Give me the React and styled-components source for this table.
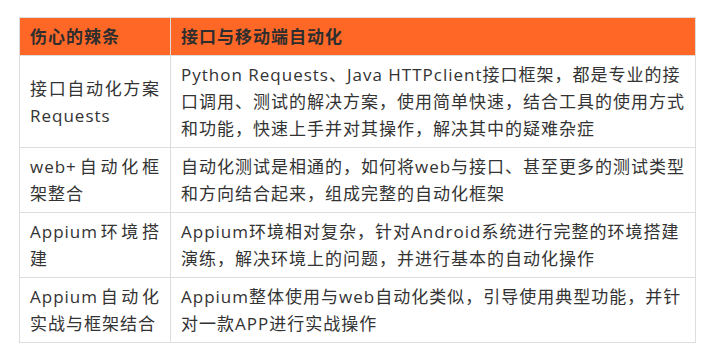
import React from 'react'
import styled, { createGlobalStyle } from 'styled-components'

const GlobalStyle = createGlobalStyle`
  body {
    margin: 0;
    background: #ffffff;
  }
`

const Page = styled.div`
  padding: 17px 0 0 19px;
  font-family: "Open Sans", "Noto Sans CJK SC", sans-serif;
`

const Table = styled.table`
  width: 677px;
  border-collapse: collapse;
  table-layout: fixed;
  font-size: 17px;
  line-height: 27px;
  letter-spacing: 1px;
  color: #333333;
`

const HeadCell = styled.th`
  background: #ff6726;
  border: 1px solid #dddddd;
  padding: 5px 10px;
  text-align: left;
  font-weight: 700;
  color: #2e2e2e;
  width: ${(p) => p.width || 'auto'};
  box-sizing: border-box;
`

const Cell = styled.td`
  border: 1px solid #dddddd;
  padding: ${(p) => (p.justify ? '5px 10px' : '5px 4px 5px 10px')};
  vertical-align: middle;
  text-align: ${(p) => (p.justify ? 'justify' : 'left')};
`

const rows = [
  {
    name: '接口自动化方案 Requests',
    desc: 'Python Requests、Java HTTPclient接口框架，都是专业的接口调用、测试的解决方案，使用简单快速，结合工具的使用方式和功能，快速上手并对其操作，解决其中的疑难杂症',
  },
  {
    name: 'web+自动化框架整合',
    desc: '自动化测试是相通的，如何将web与接口、甚至更多的测试类型和方向结合起来，组成完整的自动化框架',
  },
  {
    name: 'Appium环境搭建',
    desc: 'Appium环境相对复杂，针对Android系统进行完整的环境搭建演练，解决环境上的问题，并进行基本的自动化操作',
  },
  {
    name: 'Appium自动化实战与框架结合',
    desc: 'Appium整体使用与web自动化类似，引导使用典型功能，并针对一款APP进行实战操作',
  },
]

const App = () => {
  return (
    <Page>
      <GlobalStyle />
      <Table>
        <thead>
          <tr>
            <HeadCell width="151px">伤心的辣条</HeadCell>
            <HeadCell>接口与移动端自动化</HeadCell>
          </tr>
        </thead>
        <tbody>
          {rows.map((row) => (
            <tr key={row.name}>
              <Cell justify>{row.name}</Cell>
              <Cell>{row.desc}</Cell>
            </tr>
          ))}
        </tbody>
      </Table>
    </Page>
  )
}

export default App
